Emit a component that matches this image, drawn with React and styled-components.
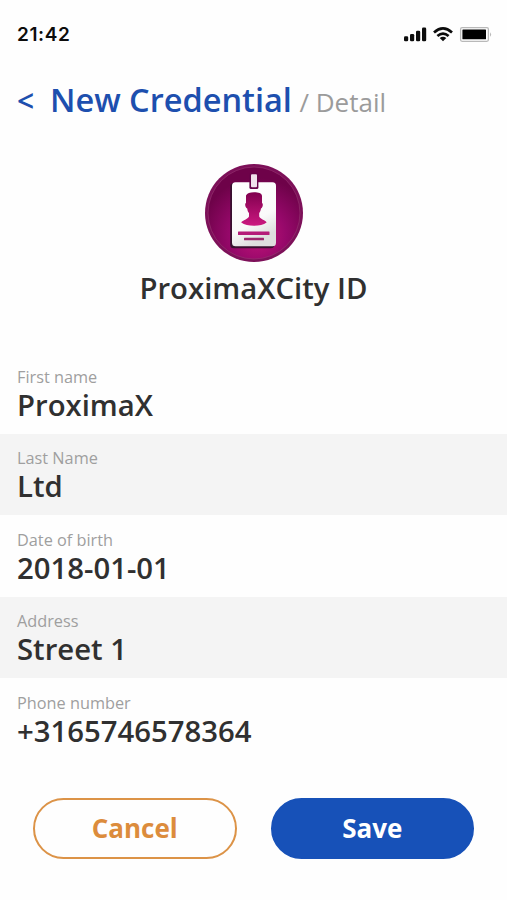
import React from 'react'
import styled, { createGlobalStyle } from 'styled-components'

const fields = [
  { label: 'First name', value: 'ProximaX' },
  { label: 'Last Name', value: 'Ltd' },
  { label: 'Date of birth', value: '2018-01-01' },
  { label: 'Address', value: 'Street 1' },
  { label: 'Phone number', value: '+3165746578364' },
]

function StatusIcons() {
  return (
    <svg width="90" height="20" viewBox="0 0 90 20">
      <rect x="2" y="12.2" width="4.2" height="5" rx="1.3" fill="#0c0c0c" />
      <rect x="8" y="10" width="4.2" height="7.2" rx="1.3" fill="#0c0c0c" />
      <rect x="14" y="6.8" width="4.2" height="10.4" rx="1.3" fill="#0c0c0c" />
      <rect x="20" y="3.6" width="4.2" height="13.6" rx="1.3" fill="#0c0c0c" />
      <g fill="none" stroke="#0c0c0c" strokeWidth="2.7">
        <path d="M32 8.4 Q41 0.4 50 8.4" />
        <path d="M35.4 12 Q41 7.2 46.6 12" />
      </g>
      <path d="M37.7 14 Q41 11.4 44.3 14 L41 17.3 Z" fill="#0c0c0c" />
      <rect x="58.6" y="3.7" width="27.8" height="13.6" rx="1.5" fill="#fff" stroke="#b9b9b9" strokeWidth="1.3" />
      <rect x="60.4" y="5.5" width="23.6" height="9.8" rx="0.6" fill="#000" />
      <path d="M88 8.2 q2.2 2.3 0 4.6z" fill="#b9b9b9" />
    </svg>
  )
}

function CredentialLogo() {
  return (
    <svg width="98" height="98" viewBox="0 0 98 98">
      <defs>
        <radialGradient id="disc" cx="54%" cy="74%" r="62%">
          <stop offset="0" stopColor="#c21478" />
          <stop offset="0.5" stopColor="#96086a" />
          <stop offset="1" stopColor="#6e0249" />
        </radialGradient>
        <linearGradient id="person" x1="0" y1="0" x2="0" y2="1">
          <stop offset="0" stopColor="#80004e" />
          <stop offset="1" stopColor="#cc1880" />
        </linearGradient>
        <linearGradient id="card" x1="0" y1="0" x2="0.4" y2="1">
          <stop offset="0" stopColor="#fff" />
          <stop offset="0.7" stopColor="#fafafa" />
          <stop offset="1" stopColor="#dedede" />
        </linearGradient>
      </defs>
      <circle cx="49" cy="49" r="49" fill="#7d1059" />
      <circle cx="49" cy="49" r="46" fill="url(#disc)" stroke="#93306f" strokeWidth="0.7" />
      <rect x="25.2" y="19" width="44" height="65.2" rx="3.5" fill="#38102f" />
      <rect x="27" y="18.2" width="44" height="64" rx="3.5" fill="url(#card)" />
      <rect x="44.4" y="9.4" width="9" height="15.6" rx="1.6" fill="#650449" />
      <rect x="46" y="10.2" width="6" height="13" rx="1" fill="#f0e3ec" />
      <path
        d="M41 39 L41 31.5 C42 29 45 28.2 49 28.2 C53.6 28.2 56.6 29 57 31.8 L57 39 C58.6 39.6 57.6 44 56 44.4 C55.6 46.6 55 48 54.2 49 V52.6 C55.4 55.6 60.6 56 61.6 58.6 Q57 61.8 49 61.8 Q41 61.8 36.2 58.6 C38 56 42.6 55.6 44 52.6 V49 C43 48 42.5 46.6 42.2 44.4 C40.4 44 39.4 39.6 41 39Z"
        fill="url(#person)"
      />
      <rect x="33" y="67.4" width="31.5" height="3.6" rx="0.5" fill="#b51b79" />
      <rect x="39" y="73.8" width="20" height="2.4" rx="0.5" fill="#9d266d" />
    </svg>
  )
}

function App() {
  return (
    <>
      <GlobalStyle />
      <Screen>
        <StatusBar>
          <Time>21:42</Time>
          <StatusIcons />
        </StatusBar>
        <Header>
          <Back>&lt;</Back>
          <Title>New Credential</Title>
          <Crumb>/ Detail</Crumb>
        </Header>
        <Credential>
          <CredentialLogo />
          <CredentialName>ProximaXCity ID</CredentialName>
        </Credential>
        <Fields>
          {fields.map((field, i) => (
            <Field key={field.label} $shaded={i % 2 === 1}>
              <Label>{field.label}</Label>
              <Value>{field.value}</Value>
            </Field>
          ))}
        </Fields>
        <Actions>
          <Button>Cancel</Button>
          <Button $primary>Save</Button>
        </Actions>
      </Screen>
    </>
  )
}

export default App

const GlobalStyle = createGlobalStyle`
  * {
    box-sizing: border-box;
  }
  body {
    margin: 0;
    background: #fefefe;
    font-family: "Open Sans", sans-serif;
  }
`

const Screen = styled.div`
  display: flex;
  flex-direction: column;
  width: 507px;
  height: 900px;
  overflow: hidden;
`

const StatusBar = styled.div`
  display: flex;
  align-items: center;
  justify-content: space-between;
  height: 68px;
  padding: 0 15px 0 17px;
`

const Time = styled.span`
  font-family: Inter, sans-serif;
  font-size: 19px;
  font-weight: 600;
  letter-spacing: 0.6px;
  color: #0c0c0c;
`

const Header = styled.header`
  display: flex;
  align-items: baseline;
  height: 95.5px;
  padding: 9px 17px 0;
  line-height: 46px;
`

const Back = styled.span`
  width: 33px;
  font-size: 30px;
  font-weight: 600;
  color: #1d4fae;
`

const Title = styled.h1`
  margin: 0;
  font-size: 32.5px;
  font-weight: 600;
  color: #1d4fae;
`

const Crumb = styled.span`
  margin-left: 7.5px;
  font-size: 26px;
  color: #9b9b9b;
`

const Credential = styled.div`
  display: flex;
  flex-direction: column;
  align-items: center;
  height: 188.5px;
`

const CredentialName = styled.h2`
  margin: 6.5px 0 0;
  font-size: 29.3px;
  font-weight: 600;
  line-height: 40px;
  color: #303030;
`

const Fields = styled.div`
  display: flex;
  flex-direction: column;
`

const Field = styled.div`
  display: flex;
  flex-direction: column;
  height: 81.6px;
  padding: 13.5px 17px 0;
  background: ${(props) => (props.$shaded ? '#f4f4f4' : 'transparent')};
`

const Label = styled.span`
  font-size: 16.3px;
  line-height: 22px;
  color: #9f9f9f;
`

const Value = styled.span`
  font-size: 29.3px;
  font-weight: 600;
  line-height: 35px;
  color: #303030;
`

const Actions = styled.div`
  display: flex;
  gap: 34px;
  padding: 38px 33px 0;
`

const Button = styled.button`
  width: 204px;
  height: 61px;
  padding: 0;
  border: 2px solid ${(props) => (props.$primary ? '#1751b8' : '#dc9347')};
  border-radius: 31px;
  background: ${(props) => (props.$primary ? '#1751b8' : 'transparent')};
  color: ${(props) => (props.$primary ? '#fff' : '#dc8c3c')};
  font-family: inherit;
  font-size: 26px;
  font-weight: 700;
`
